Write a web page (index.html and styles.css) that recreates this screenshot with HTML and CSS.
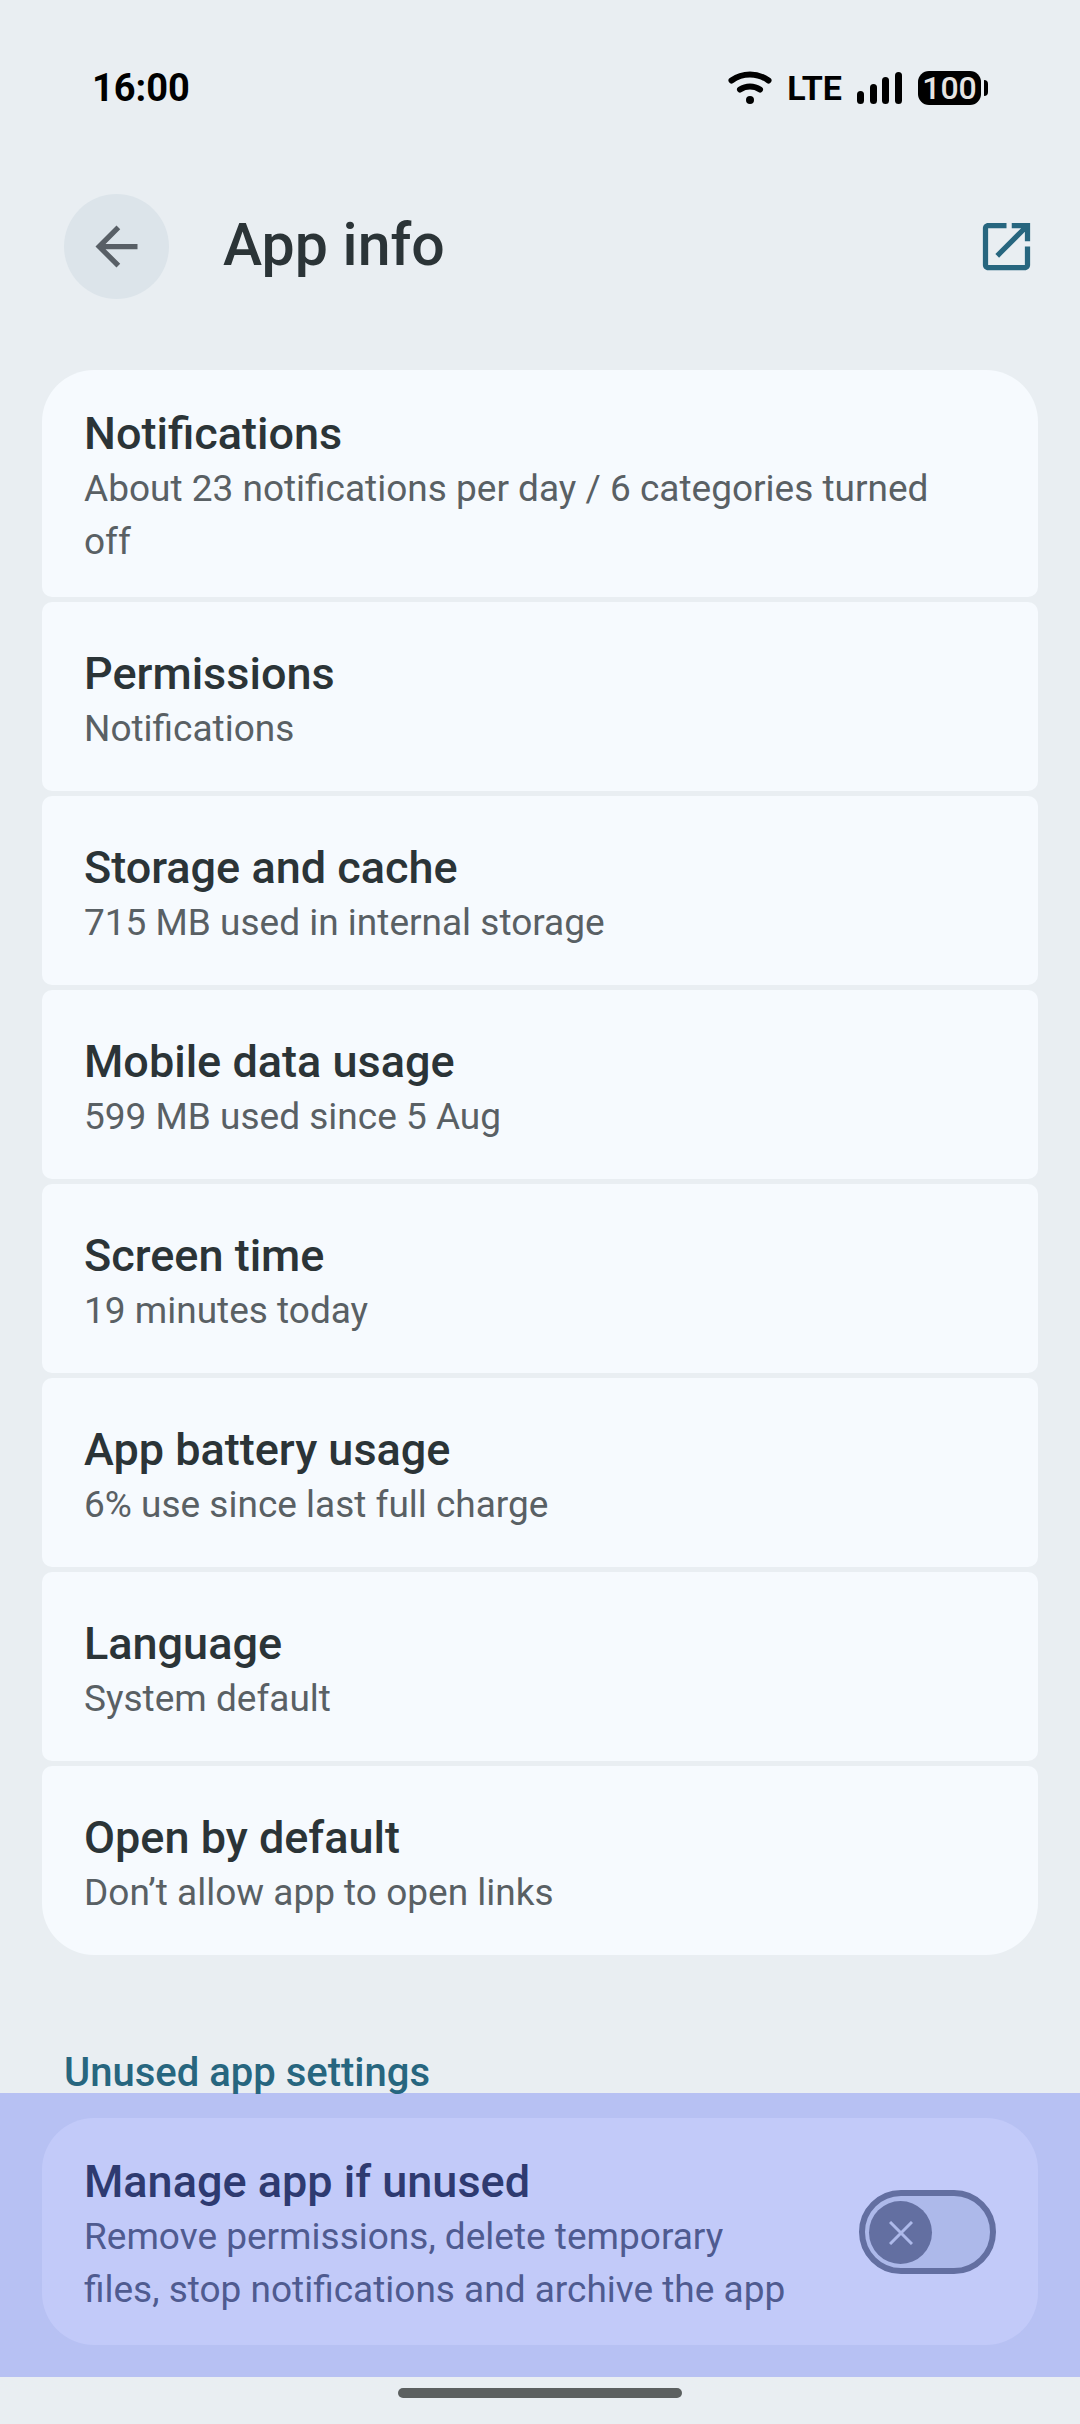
FILE: index.html
```html
<!DOCTYPE html>
<html lang="en">
<head>
	<meta charset="utf-8">
	<title>App info</title>
	<meta name="viewport" content="width=device-width, initial-scale=1.0">
	<link rel="stylesheet" href="styles.css">
</head>
<body>
<div class="status">
	<span class="time">16:00</span>
	<div class="status-icons">
		<svg class="wifi" viewBox="0 0 44 34" width="44" height="34" fill="none" stroke="#000" stroke-width="6" stroke-linecap="round">
			<path d="M3.500 9.500C14.500 1.500 29.500 1.500 40.500 9.500"/>
			<path d="M12 18.500C18 14.500 26 14.500 32 18.500"/>
			<circle cx="22" cy="29" r="4" fill="#000" stroke="none"/>
		</svg>
		<span class="network">LTE</span>
		<svg class="signal" viewBox="0 0 46 32" width="46" height="32">
			<rect x="0" y="19" width="7" height="13" rx="3.500"/>
			<rect x="13" y="12" width="7" height="20" rx="3.500"/>
			<rect x="25" y="5" width="7" height="27" rx="3.500"/>
			<rect x="38" y="0" width="7" height="32" rx="3.500"/>
		</svg>
		<div class="battery"><span class="level">100</span><span class="nub"></span></div>
	</div>
</div>

<header class="header">
	<button class="back" aria-label="Back">
		<svg viewBox="0 0 24 24" width="63" height="63"><path d="M20 11H7.830l5.590-5.590L12 4l-8 8 8 8 1.410-1.410L7.830 13H20v-2z"/></svg>
	</button>
	<h1>App info</h1>
	<button class="open" aria-label="Open app">
		<svg viewBox="0 0 24 24" width="63" height="63"><path d="M19 19H5V5h7V3H5c-1.110 0-2 .9-2 2v14c0 1.100.89 2 2 2h14c1.100 0 2-.9 2-2v-7h-2v7zM14 3v2h3.590l-9.830 9.830 1.410 1.410L19 6.410V10h2V3h-7z"/></svg>
	</button>
</header>

<main>
	<nav class="list">
		<a class="card" href="#"><span class="name">Notifications</span><span class="info">About 23 notifications per day / 6 categories turned off</span></a>
		<a class="card" href="#"><span class="name">Permissions</span><span class="info">Notifications</span></a>
		<a class="card" href="#"><span class="name">Storage and cache</span><span class="info">715 MB used in internal storage</span></a>
		<a class="card" href="#"><span class="name">Mobile data usage</span><span class="info">599 MB used since 5 Aug</span></a>
		<a class="card" href="#"><span class="name">Screen time</span><span class="info">19 minutes today</span></a>
		<a class="card" href="#"><span class="name">App battery usage</span><span class="info">6% use since last full charge</span></a>
		<a class="card" href="#"><span class="name">Language</span><span class="info">System default</span></a>
		<a class="card" href="#"><span class="name">Open by default</span><span class="info">Don’t allow app to open links</span></a>
	</nav>

	<h2>Unused app settings</h2>
	<section class="highlight">
		<label class="card manage" for="manage">
			<span class="text">
				<span class="name">Manage app if unused</span>
				<span class="info">Remove permissions, delete temporary files, stop notifications and archive the app</span>
			</span>
			<span class="switch">
				<input type="checkbox" id="manage">
				<span class="thumb">
					<svg viewBox="0 0 24 24" width="24" height="24" stroke="#adb9ea" stroke-width="3"><path d="M1 1L23 23M23 1L1 23"/></svg>
				</span>
			</span>
		</label>
	</section>
</main>

<div class="gesture"><div class="handle"></div></div>
</body>
</html>
```
FILE: styles.css
```css
body {
	margin: 0;
	background: #e9eef2;
	color: #2b3437;
	font-family: Roboto, "Liberation Sans", sans-serif;
}
h1, h2 {
	margin: 0;
	font-weight: 500;
}
button {
	border: 0;
	padding: 0;
	background: none;
}
svg {
	display: block;
}

.status {
	display: flex;
	justify-content: space-between;
	align-items: center;
	height: 175px;
	padding: 0 92px;
	color: #000;
}
.time {
	font-size: 38px;
	font-weight: 700;
}
.status-icons {
	display: flex;
	align-items: center;
	gap: 15px;
}
.network {
	font-size: 34px;
	font-weight: 700;
}
.battery {
	display: flex;
	align-items: center;
	gap: 3px;
}
.level {
	background: #000;
	color: #e6e4e2;
	border-radius: 11px;
	width: 63px;
	font-size: 32px;
	font-weight: 500;
	line-height: 34px;
	text-align: center;
}
.nub {
	width: 4px;
	height: 16px;
	background: #000;
	border-radius: 0 4px 4px 0;
}

.header {
	display: flex;
	align-items: center;
	padding: 19px 42px 71px 64px;
}
.back {
	display: flex;
	align-items: center;
	justify-content: center;
	width: 105px;
	height: 105px;
	border-radius: 50%;
	background: #dce4ea;
	fill: #585f66;
}
.header h1 {
	flex: 1;
	margin-left: 54px;
	padding-bottom: 4px;
	font-size: 59px;
	line-height: 72px;
}
.open {
	fill: #27667f;
}

.list {
	display: flex;
	flex-direction: column;
	gap: 5px;
	margin: 0 42px;
}
.card {
	box-sizing: border-box;
	display: flex;
	flex-direction: column;
	justify-content: center;
	min-height: 189px;
	padding: 36px 42px 29px;
	border-radius: 10px;
	background: #f6fafe;
	color: #2b3437;
	text-decoration: none;
}
.card:first-child {
	border-top-left-radius: 52px;
	border-top-right-radius: 52px;
}
.card:last-child {
	border-bottom-left-radius: 52px;
	border-bottom-right-radius: 52px;
}
.name {
	display: block;
	font-size: 45px;
	font-weight: 500;
	line-height: 56px;
}
.info {
	display: block;
	font-size: 37px;
	line-height: 53px;
	color: #596064;
}
.list .info {
	padding-right: 24px;
}

h2 {
	padding: 98px 64px 0;
	font-size: 40px;
	line-height: 40px;
	color: #27667f;
}
.highlight {
	padding: 25px 42px 32px;
	background: #b7c1f3;
}
.manage {
	flex-direction: row;
	align-items: center;
	gap: 52px;
	background: #c2caf9;
	color: #2e3a70;
}
.manage .text {
	flex: 1;
}
.manage .info {
	color: #4f5b90;
}
.switch {
	position: relative;
	width: 137px;
	height: 84px;
	margin-bottom: 6px;
}
.switch input {
	appearance: none;
	box-sizing: border-box;
	display: block;
	width: 100%;
	height: 100%;
	margin: 0;
	border: 6px solid #636fa1;
	border-radius: 42px;
	background: #adb9ea;
}
/* knob lies over the track */
.thumb {
	position: absolute;
	top: 11px;
	left: 10px;
	display: flex;
	align-items: center;
	justify-content: center;
	width: 63px;
	height: 63px;
	border-radius: 50%;
	background: #636fa1;
	pointer-events: none;
}
.switch input:checked + .thumb {
	left: 64px;
}

.gesture {
	display: flex;
	justify-content: center;
	padding: 11px 0 26px;
}
.handle {
	width: 284px;
	height: 10px;
	border-radius: 5px;
	background: #5c6060;
}
```
